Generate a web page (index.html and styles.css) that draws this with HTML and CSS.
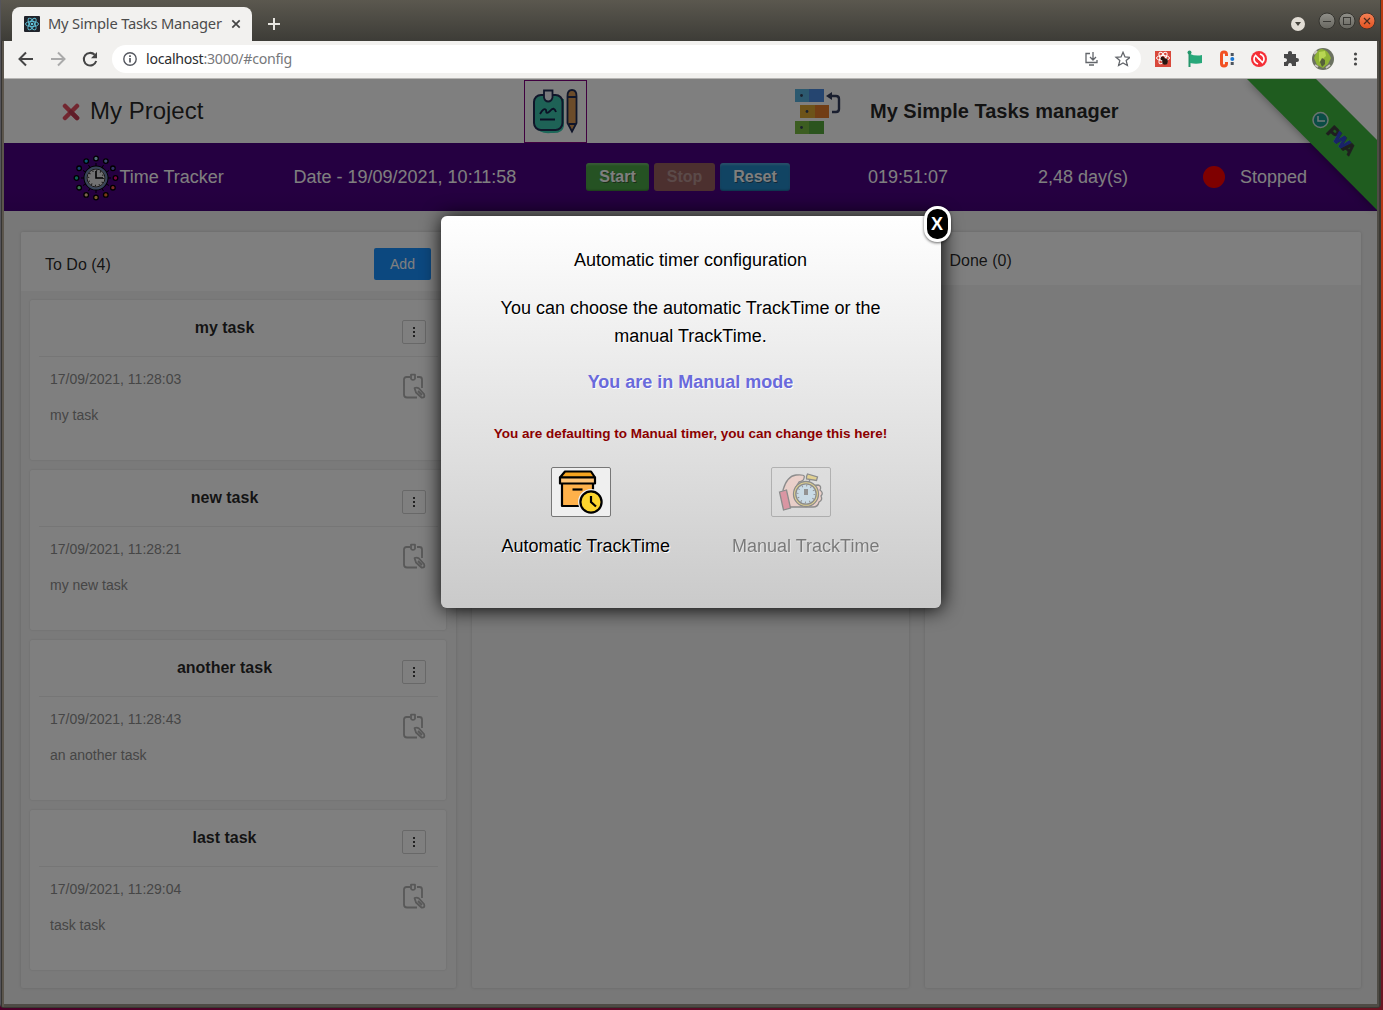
FILE: index.html
```html
<!DOCTYPE html>
<html lang="en">
<head>
<meta charset="utf-8">
<title>My Simple Tasks Manager</title>
<link rel="stylesheet" href="styles.css">
</head>
<body>
<svg class="defs" width="0" height="0">
  <symbol id="clip" viewBox="0 0 24 26"><path d="M8 4H4.500Q2 4 2 6.500v15Q2 24.500 5 24.500h10M15 4h2.500Q20 4 20 6.500V15M9 1.700h4v4q-2 2.500-4 0zM12.500 15q2.500-1 4.500.5l5 5.500q1.500 4-2.500 3.500l-5.500-5zM16 18l4 4" fill="none" stroke="currentColor" stroke-width="1.800" stroke-linejoin="round"/></symbol>
</svg>
<div class="window">
  <div class="tabstrip">
    <div class="tab">
      <svg width="16" height="16" viewBox="0 0 16 16"><rect width="16" height="16" rx="1" fill="#20232a"/><g fill="none" stroke="#61c5dc" stroke-width=".9"><ellipse cx="8" cy="8" rx="6.500" ry="2.600"/><ellipse cx="8" cy="8" rx="6.500" ry="2.600" transform="rotate(60 8 8)"/><ellipse cx="8" cy="8" rx="6.500" ry="2.600" transform="rotate(120 8 8)"/></g><circle cx="8" cy="8" r="1.300" fill="#61c5dc"/></svg>
      <span class="tab-title">My Simple Tasks Manager</span>
      <svg width="10" height="10" viewBox="0 0 10 10"><path d="M1.300 1.300l7.400 7.400M8.700 1.300L1.300 8.700" stroke="#444" stroke-width="1.700"/></svg>
    </div>
    <svg class="plus" width="12" height="12" viewBox="0 0 12 12"><path d="M6 0v12M0 6h12" stroke="#e8e6e1" stroke-width="2"/></svg>
    <svg class="controls" width="90" height="24" viewBox="0 0 90 24">
      <defs><linearGradient id="btn" x2="0" y2="1"><stop stop-color="#91908a"/><stop offset="1" stop-color="#67665f"/></linearGradient><linearGradient id="cls" x2="0" y2="1"><stop stop-color="#f58257"/><stop offset="1" stop-color="#e2511f"/></linearGradient></defs>
      <circle cx="11" cy="15" r="7" fill="#e2ddd5"/><path d="M8 13h6l-3 4z" fill="#45433c"/>
      <circle cx="40" cy="12" r="8" fill="url(#btn)" stroke="#35342f"/><path d="M36 12.500h8" stroke="#3a3935"/>
      <circle cx="60" cy="12" r="8" fill="url(#btn)" stroke="#35342f"/><rect x="56.500" y="8.500" width="7" height="7" fill="none" stroke="#3a3935"/>
      <circle cx="80" cy="12" r="8" fill="url(#cls)" stroke="#45332b"/><path d="M77 9l6 6M83 9l-6 6" stroke="#4a2a1d" stroke-width="1.200"/>
    </svg>
  </div>
  <div class="toolbar">
    <svg class="navicons" width="84" height="20" viewBox="0 0 84 20"><g fill="none" stroke-width="2"><path d="M20 10H7M13 3.500L6.500 10l6.500 6.500" stroke="#454545"/><path d="M38 10h13M45 3.500l6.500 6.500-6.500 6.500" stroke="#aaa"/><path d="M82.500 5.800A6.300 6.300 0 1 0 84 12" stroke="#454545" transform="translate(-.8)"/></g><path d="M85 3v6.300h-6z" fill="#454545" transform="translate(-1)"/></svg>
    <div class="omnibox">
      <svg width="14" height="14" viewBox="0 0 14 14"><circle cx="7" cy="7" r="6.200" fill="none" stroke="#555860" stroke-width="1.400"/><path d="M7 6v4.500M7 3.300v1.600" stroke="#555860" stroke-width="1.700"/></svg>
      <span class="url"><b>localhost</b>:3000/#config</span>
      <svg class="save" width="46" height="16" viewBox="0 0 46 16"><g fill="none" stroke="#62656a" stroke-width="1.300"><path d="M6 2.500H2v9h11V9M5 14h5M9 1v7.500M6 6l3 3 3-3"/><path d="M39 1.300l2 4.600 5 .4-3.800 3.300 1.200 4.900L39 11.900l-4.400 2.600 1.200-4.900L32 6.300l5-.4z"/></g></svg>
    </div>
    <svg class="exts" width="212" height="24" viewBox="0 0 212 24">
      <rect x="5" y="4" width="16" height="16" fill="#d9483b"/><g fill="none" stroke="#fff"><ellipse cx="13" cy="11" rx="6.500" ry="2.500"/><ellipse cx="13" cy="11" rx="6.500" ry="2.500" transform="rotate(60 13 11)"/><ellipse cx="13" cy="11" rx="6.500" ry="2.500" transform="rotate(120 13 11)"/></g><circle cx="12.500" cy="11.500" r="2" fill="#29150f"/><ellipse cx="15" cy="14.500" rx="2.800" ry="3.300" fill="#29150f"/>
      <path d="M39.500 5v15" stroke="#24966b" stroke-width="2"/><circle cx="39.500" cy="5.500" r="2" fill="#24966b"/><path d="M40 7q6 2.500 12 1v8q-6 1.500-12 0z" fill="#28a87a"/>
      <path d="M76.500 9V7.500Q76.500 5 74 5t-2.500 2.500v9Q71.500 19 74 19t2.500-2.500V15" fill="none" stroke="#f25122" stroke-width="3"/><path d="M80.700 6h3v3h-3zM80.700 15h3v3h-3z" fill="#4d555e"/><circle cx="82.300" cy="12" r="2" fill="#1976d2"/>
      <circle cx="109" cy="12" r="8" fill="#f52f36"/><g fill="none" stroke="#fff" stroke-width="1.700"><path d="M108 17q-4-1.500-4-5 0-2 1.500-3.500l4.500 4.500"/><path d="M110 7q4 1.500 4 5 0 2-1.500 3.500L108 11"/></g>
      <path d="M134 7h4q-.5-3 2-3t2 3h4v4q3-.5 3 2t-3 2v4h-4q0-3-2-3t-2 3h-4v-4q3 0 3-2t-3-2z" fill="#484848"/>
      <circle cx="173" cy="12" r="11" fill="#6b7160"/><path d="M164 11q3-9 8-9 6 1 9 9l-3 6-5 4-6-3z" fill="#8fb335"/><path d="M169 5l6-1 1 5-7 6z" fill="#b8d653"/><path d="M172 11l3 2v4l-3 3-2-5z" fill="#55603a"/><path d="M164 7l3-3M176 21l4-3M165 18l3 2" stroke="#ccc7c2" stroke-width="2"/>
      <g fill="#484848"><circle cx="205.500" cy="7" r="1.600"/><circle cx="205.500" cy="12" r="1.600"/><circle cx="205.500" cy="17" r="1.600"/></g>
    </svg>
  </div>

  <div class="page">
    <header class="header">
      <svg class="cross" width="18" height="18" viewBox="0 0 18 18"><path d="M3 3l12 12M15 3L3 15" stroke="#e54e60" stroke-width="4.500" stroke-linecap="round"/><path d="M9 9l6 6" stroke="#be3a52" stroke-width="4.500" stroke-linecap="round"/></svg>
      <span class="project">My Project</span>
      <span class="notes"><svg width="61" height="61" viewBox="0 0 61 61">
        <path d="M11 46q3 7 15 6 12 1 13-7V18H11z" fill="#38cfb2"/>
        <rect x="9" y="14" width="28.500" height="35" rx="7" fill="#3dc4ac" stroke="#202c55" stroke-width="2"/>
        <path d="M19 9.500h8.500v7q-1 4-4.300 4T19 16.500z" fill="#f2f2f8" stroke="#202c55" stroke-width="1.800"/>
        <path d="M15 33q4-7 6-4 0 5 4 1 4-5 6 1M15 38.500h15" fill="none" stroke="#17204b" stroke-width="1.900"/>
        <path d="M42.500 15q0-6 4.500-6t4.500 6v27L47 50.500 42.500 42z" fill="#d89955" stroke="#202c55" stroke-width="1.800"/><path d="M43 16h9M44 43h7" stroke="#202c55" stroke-width="1.800"/>
      </svg></span>
      <svg class="blocks" width="47" height="47" viewBox="0 0 47 47"><path d="M1 1h14v13H1z" fill="#58b2de"/><path d="M15 1h15v13H15z" fill="#4a8be0"/><path d="M6 17h15v13H6z" fill="#dba632"/><path d="M21 17h14v13H21z" fill="#e27b2b"/><path d="M1 33h14v13H1z" fill="#79bb43"/><path d="M15 33h15v13H15z" fill="#57a83d"/><g fill="#354158"><circle cx="7.500" cy="7.500" r="1.400"/><circle cx="13" cy="23.500" r="1.400"/><circle cx="7.500" cy="39.500" r="1.400"/></g><path d="M36 8h6q3 0 3 3v10q0 3-3 3h-4" fill="none" stroke="#343e5e" stroke-width="2.400"/><path d="M32 8l6-4v8z" fill="#343e5e"/></svg>
      <h1>My Simple Tasks manager</h1>
    </header>
    <nav class="tracker">
      <svg class="clock" width="46" height="46" viewBox="0 0 46 46">
        <g stroke="#000" stroke-width="1"><path d="M23 8v30M8 23h30M15.500 10l15 26M10 15.500l26 15M30.500 10l-15 26M36 15.500l-26 15"/></g>
        <circle cx="23" cy="23" r="11.500" fill="#e4e4e4" stroke="#000" stroke-width="2"/><circle cx="23" cy="23" r="10.500" fill="none" stroke="#7189b5" stroke-width="2"/><circle cx="23" cy="23" r="9" fill="none" stroke="#000" stroke-width=".8"/><circle cx="23" cy="23" r="7.500" fill="none" stroke="#222" stroke-dasharray="1 2.930" stroke-width="1.500"/>
        <path d="M23 16v7h7" fill="none" stroke="#000" stroke-width="1.600"/>
        <g stroke="#000" stroke-width="1.300"><circle cx="23" cy="3.500" r="2.300" fill="#a4dcf5"/><circle cx="32.800" cy="6.100" r="2.300" fill="#7d98e4"/><circle cx="39.900" cy="13.300" r="2.300" fill="#6664d4"/><circle cx="42.500" cy="23" r="2.300" fill="#f80a84"/><circle cx="39.900" cy="32.700" r="2.300" fill="#f85a50"/><circle cx="32.800" cy="39.900" r="2.300" fill="#fa7529"/><circle cx="23" cy="42.500" r="2.300" fill="#f4bb54"/><circle cx="13.200" cy="39.900" r="2.300" fill="#fccb9b"/><circle cx="6.100" cy="32.700" r="2.300" fill="#78e39f"/><circle cx="3.500" cy="23" r="2.300" fill="#1bc3a4"/><circle cx="6.100" cy="13.300" r="2.300" fill="#2a86dc"/><circle cx="13.200" cy="6.100" r="2.300" fill="#16b2e6"/></g>
      </svg>
      <span class="label">Time Tracker</span>
      <span class="date">Date - 19/09/2021, 10:11:58</span>
      <div class="actions"><button class="start">Start</button><button class="stop">Stop</button><button class="reset">Reset</button></div>
      <span class="elapsed">019:51:07</span>
      <span class="days">2,48 day(s)</span>
      <i class="dot"></i>
      <span class="state">Stopped</span>
    </nav>
    <svg class="ribbon" width="150" height="150" viewBox="0 0 150 150">
      <defs><filter id="sh" x="-20%" y="-20%" width="140%" height="140%"><feGaussianBlur stdDeviation="5"/></filter></defs>
      <path d="M20 0h66l64 64v67z" opacity=".4" filter="url(#sh)"/><path d="M89 0h61v61z" fill="#fff"/><path d="M20 0h69l61 61v70z" fill="#3eb83e"/>
      <circle cx="93.500" cy="41" r="7.500" fill="#16988b" stroke="#d5e7e0" stroke-width="1.500"/><path d="M91 37v5h7" fill="none" stroke="#e4f2ed" stroke-width="1.500"/>
      <g transform="translate(103 51) rotate(45)" class="pwa"><text x="-1" y="5" fill="#3d3d3d" stroke="#3d3d3d">P</text><text x="8" y="5" fill="#3245d2" stroke="#3245d2" textLength="16" lengthAdjust="spacingAndGlyphs">W</text><text x="21" y="5" fill="#3d3d3d" stroke="#3d3d3d" textLength="11" lengthAdjust="spacingAndGlyphs">A</text></g>
    </svg>
    <main class="board">
      <section class="column todo">
        <div class="column-head"><span>To Do (4)</span><button class="add">Add</button></div>
        <article class="card"><div class="card-head"><h2>my task</h2><span class="more"><i></i><i></i><i></i></span></div><div class="card-body"><div><time>17/09/2021, 11:28:03</time><p>my task</p></div><svg width="24" height="26"><use href="#clip"/></svg></div></article>
        <article class="card"><div class="card-head"><h2>new task</h2><span class="more"><i></i><i></i><i></i></span></div><div class="card-body"><div><time>17/09/2021, 11:28:21</time><p>my new task</p></div><svg width="24" height="26"><use href="#clip"/></svg></div></article>
        <article class="card"><div class="card-head"><h2>another task</h2><span class="more"><i></i><i></i><i></i></span></div><div class="card-body"><div><time>17/09/2021, 11:28:43</time><p>an another task</p></div><svg width="24" height="26"><use href="#clip"/></svg></div></article>
        <article class="card"><div class="card-head"><h2>last task</h2><span class="more"><i></i><i></i><i></i></span></div><div class="card-body"><div><time>17/09/2021, 11:29:04</time><p>task task</p></div><svg width="24" height="26"><use href="#clip"/></svg></div></article>
      </section>
      <section class="column"></section>
      <section class="column"><div class="column-head"><span>Done (0)</span></div></section>
    </main>
    <div class="overlay">
      <div class="modal">
        <span class="close">X</span>
        <p class="title">Automatic timer configuration</p>
        <p class="intro">You can choose the automatic TrackTime or the manual TrackTime.</p>
        <p class="mode">You are in Manual mode</p>
        <p class="warning">You are defaulting to Manual timer, you can change this here!</p>
        <div class="choices">
          <div class="choice">
            <button><svg width="58" height="48" viewBox="0 0 58 48"><g stroke="#000" stroke-width="2.200" stroke-linejoin="round"><path d="M10 15h31v23H10z" fill="#ffb14a"/><path d="M13 3.500h26l4 6H8z" fill="#f6a41f"/><path d="M8 9.500h35v6H8z" fill="#ffc477"/></g><circle cx="39" cy="34" r="13" fill="#efefef"/><path d="M26 30q3-9 13-9.500V17H26z" fill="#ffb14a"/><path d="M20.500 21.500h10" stroke="#000" stroke-width="2.200"/><circle cx="39" cy="34" r="10.600" fill="#fdd62e" stroke="#000" stroke-width="2.200"/><path d="M39 28v6l5 4.500" fill="none" stroke="#000" stroke-width="2.200"/></svg></button>
            <span>Automatic TrackTime</span>
          </div>
          <div class="choice off">
            <button><svg width="58" height="48" viewBox="0 0 58 48"><g stroke="#222" stroke-width="1.300"><path d="M15 39l-4-17q4-14 13-15 10-1 8 3 0 3-5 4l-3 5 22-2q4 1 2 5 4 3 1 6 2 4-2 6-1 5-6 5z" fill="#ffc2b3"/><path d="M7.500 24l7-2 4 18-7 2z" fill="#dc3b5a"/><path d="M34.500 8.500l1-2.500 10 3-1 3.500-10-1.500zM38 11l-1 3" fill="#e8c22c"/><circle cx="34" cy="26" r="12.500" fill="#efc927"/><circle cx="34" cy="26" r="10.200" fill="#b4ddf6"/></g><circle cx="34" cy="26" r="8.500" fill="none" stroke="#333" stroke-dasharray="1 3.450" stroke-width="2"/><path d="M34 21v6" stroke="#333" stroke-width="4"/></svg></button>
            <span>Manual TrackTime</span>
          </div>
        </div>
      </div>
    </div>
  </div>
</div>
</body>
</html>
```
FILE: styles.css
```css
* { box-sizing: border-box; }
html { background: #4a0029; }
body { margin: 0; height: 1010px; font-family: "Liberation Sans", Arial, sans-serif; background: linear-gradient(#ba3a12, #b53518 40%, #7b1729 85%, #6c1422) right / 3px 100% no-repeat, linear-gradient(90deg, #4a0029, #6c1422); }
svg { display: block; flex: none; }
p, h1, h2 { margin: 0; }
button { font-family: inherit; }
.defs { position: absolute; }
.window {
  width: 1381px; height: 1008px; padding: 0 4px;
  background: linear-gradient(90deg, #55545b 1px, #353432 1px 2px, #5b554c 2px 4px, #4e4b45 4px 1379px, #393832 1379px);
  border-bottom: 1px solid #393832; border-radius: 0 0 4px 4px;
}
.tabstrip { height: 41px; margin: 0 -3px; padding: 7px 3px 0 11px; display: flex; background: linear-gradient(#5b584f, #3d3c37); }
.tab { width: 240px; height: 34px; padding: 0 11px 0 12px; display: flex; align-items: center; background: #f2f1ef; border-radius: 8px 8px 0 0; }
.tab-title { flex: 1; margin: -2px 0 0 8px; font: 14.700px "Noto Sans", sans-serif; letter-spacing: -.2px; color: #4c4c4c; white-space: nowrap; }
.plus { margin: 11px 0 0 16px; }
.controls { margin: 2px 0 0 auto; }
.toolbar { height: 38px; width: 1373px; background: #f2f1ef; border-bottom: 1px solid #b6b5b3; display: flex; align-items: center; padding-bottom: 1px; }
.navicons { margin: 0 15px 0 9px; overflow: visible; }
.omnibox { width: 1029px; height: 28px; border-radius: 14px; background: #fff; display: flex; align-items: center; padding: 0 11px; }
.url { margin: -2px 0 0 9px; font: 14.200px "Noto Sans", sans-serif; letter-spacing: -.28px; color: #77787b; }
.url b { font-weight: 400; color: #2c2d30; }
.save { margin-left: auto; }
.exts { margin-left: 9px; }
.page { position: relative; width: 1373px; height: 925px; background: #f0f0f0; overflow: hidden; }
.header { height: 64px; background: #fff; display: flex; align-items: center; color: rgba(0,0,0,.85); }
.cross { margin: 2px 0 0 58px; }
.project { width: 434px; margin-left: 10px; font-size: 24px; }
.notes { width: 63px; height: 63px; border: 1px solid purple; margin-top: 1px; }
.blocks { margin-left: 207px; }
.header h1 { margin-left: 29px; font-size: 20px; }
.tracker { height: 68px; background: linear-gradient(#4b0082 70%, #45007a); color: #fff; display: flex; align-items: center; font-size: 18px; white-space: nowrap; }
.clock { margin: 1px 0 0 69px; }
.label { width: 174px; margin-left: .5px; }
.date { width: 292.500px; }
.actions { display: flex; gap: 5px; width: 282px; }
.actions button { height: 28px; border: 0; border-radius: 3px; padding: 0; color: #fff; font-size: 16px; font-weight: 700; text-shadow: 1px 1px 0 #2228; box-shadow: inset 0 2px 2px #fff3, inset 0 -1px 2px #0004; }
.actions .start { width: 63px; background: #4ba446; }
.actions .stop { width: 61px; background: #99615f; color: #b69492; box-shadow: none; text-shadow: none; }
.actions .reset { width: 70px; background: #2388c7; }
.elapsed { width: 170px; }
.days { width: 165px; }
.dot { width: 22px; height: 22px; border-radius: 50%; background: red; }
.state { margin-left: 15px; }
.ribbon { position: absolute; right: 0; top: 0; }
.pwa { font: bold 16px "Liberation Sans", sans-serif; stroke-width: 1; }
.board { height: 793px; padding: 21px 16px 16px 17px; display: flex; gap: 16px; }
.column { flex: 1; background: #f5f5f5; box-shadow: 0 0 3px #ccc; border-radius: 2px; overflow: hidden; }
.todo { flex: 0 0 435px; }
.column-head { height: 53px; padding: 4px 25px 0; display: flex; align-items: center; background: #fff; font-size: 16px; color: rgba(0,0,0,.85); }
.todo .column-head { height: 59px; padding: 4px 25px 0 24px; justify-content: space-between; }
.todo .column-head span { margin-top: 2px; }
.add { width: 57px; height: 32px; border: 0; border-radius: 2px; background: #1890ff; color: #fff; font-size: 14px; }
.card { height: 160px; margin: 9px 10px 10px 9px; background: #fff; box-shadow: 0 0 2px #ccc; border-radius: 2px; }
.card-head { height: 57px; margin: 0 8px 0 9px; border-bottom: 1px solid #ececec; position: relative; }
.card-head h2 { padding: 19px 28px 0 0; text-align: center; font-size: 16px; color: rgba(0,0,0,.85); }
.more { position: absolute; right: 12px; top: 20px; width: 24px; height: 24px; border: 1px solid #d0d0d0; border-radius: 2px; display: flex; flex-direction: column; align-items: center; justify-content: center; gap: 2px; }
.more i { width: 2px; height: 2px; background: #444; }
.card-body { display: flex; justify-content: space-between; padding: 13px 20px 0; color: #8c8c8c; font-size: 14px; line-height: 18px; }
.card-body time { display: block; }
.card-body p { margin-top: 18px; }
.card-body svg { margin-top: 3px; color: #b0b0b0; }
.overlay { position: absolute; inset: 0; background: rgba(0,0,0,.5); display: flex; justify-content: center; align-items: flex-start; padding-top: 137px; }
.modal { position: relative; width: 500px; height: 392px; padding: 30px 50px 0; border-radius: 6px; background: linear-gradient(#fff, #cacaca); box-shadow: 1px 1px 20px #000; text-align: center; font-size: 18px; line-height: 28px; color: #000; text-shadow: 1px 1px 0 #fff; }
.close { position: absolute; right: -10px; top: -10px; width: 27px; height: 36px; border: 3px solid #fff; border-radius: 13px; background: #000; color: #fff; font-weight: 700; line-height: 30px; box-shadow: 0 1px 3px #0009; text-shadow: none; }
.intro { margin-top: 20px; }
.mode { margin-top: 18px; color: #6a6adb; font-weight: 700; }
.warning { margin: 24px -10px 0; color: #8b0000; font-size: 13.500px; font-weight: 700; text-shadow: none; }
.choices { display: grid; grid-template-columns: 220px 220px; margin: 19px -20px 0; }
.choice { display: flex; flex-direction: column; align-items: center; gap: 15px; }
.choice span { padding-left: 10.500px; }
.choice button { width: 60px; height: 50px; padding: 0; border: 1px solid #777; border-radius: 2px; background: #efefef; }
.off { opacity: .42; }
.off button { background: #e7e7e766; }
```
